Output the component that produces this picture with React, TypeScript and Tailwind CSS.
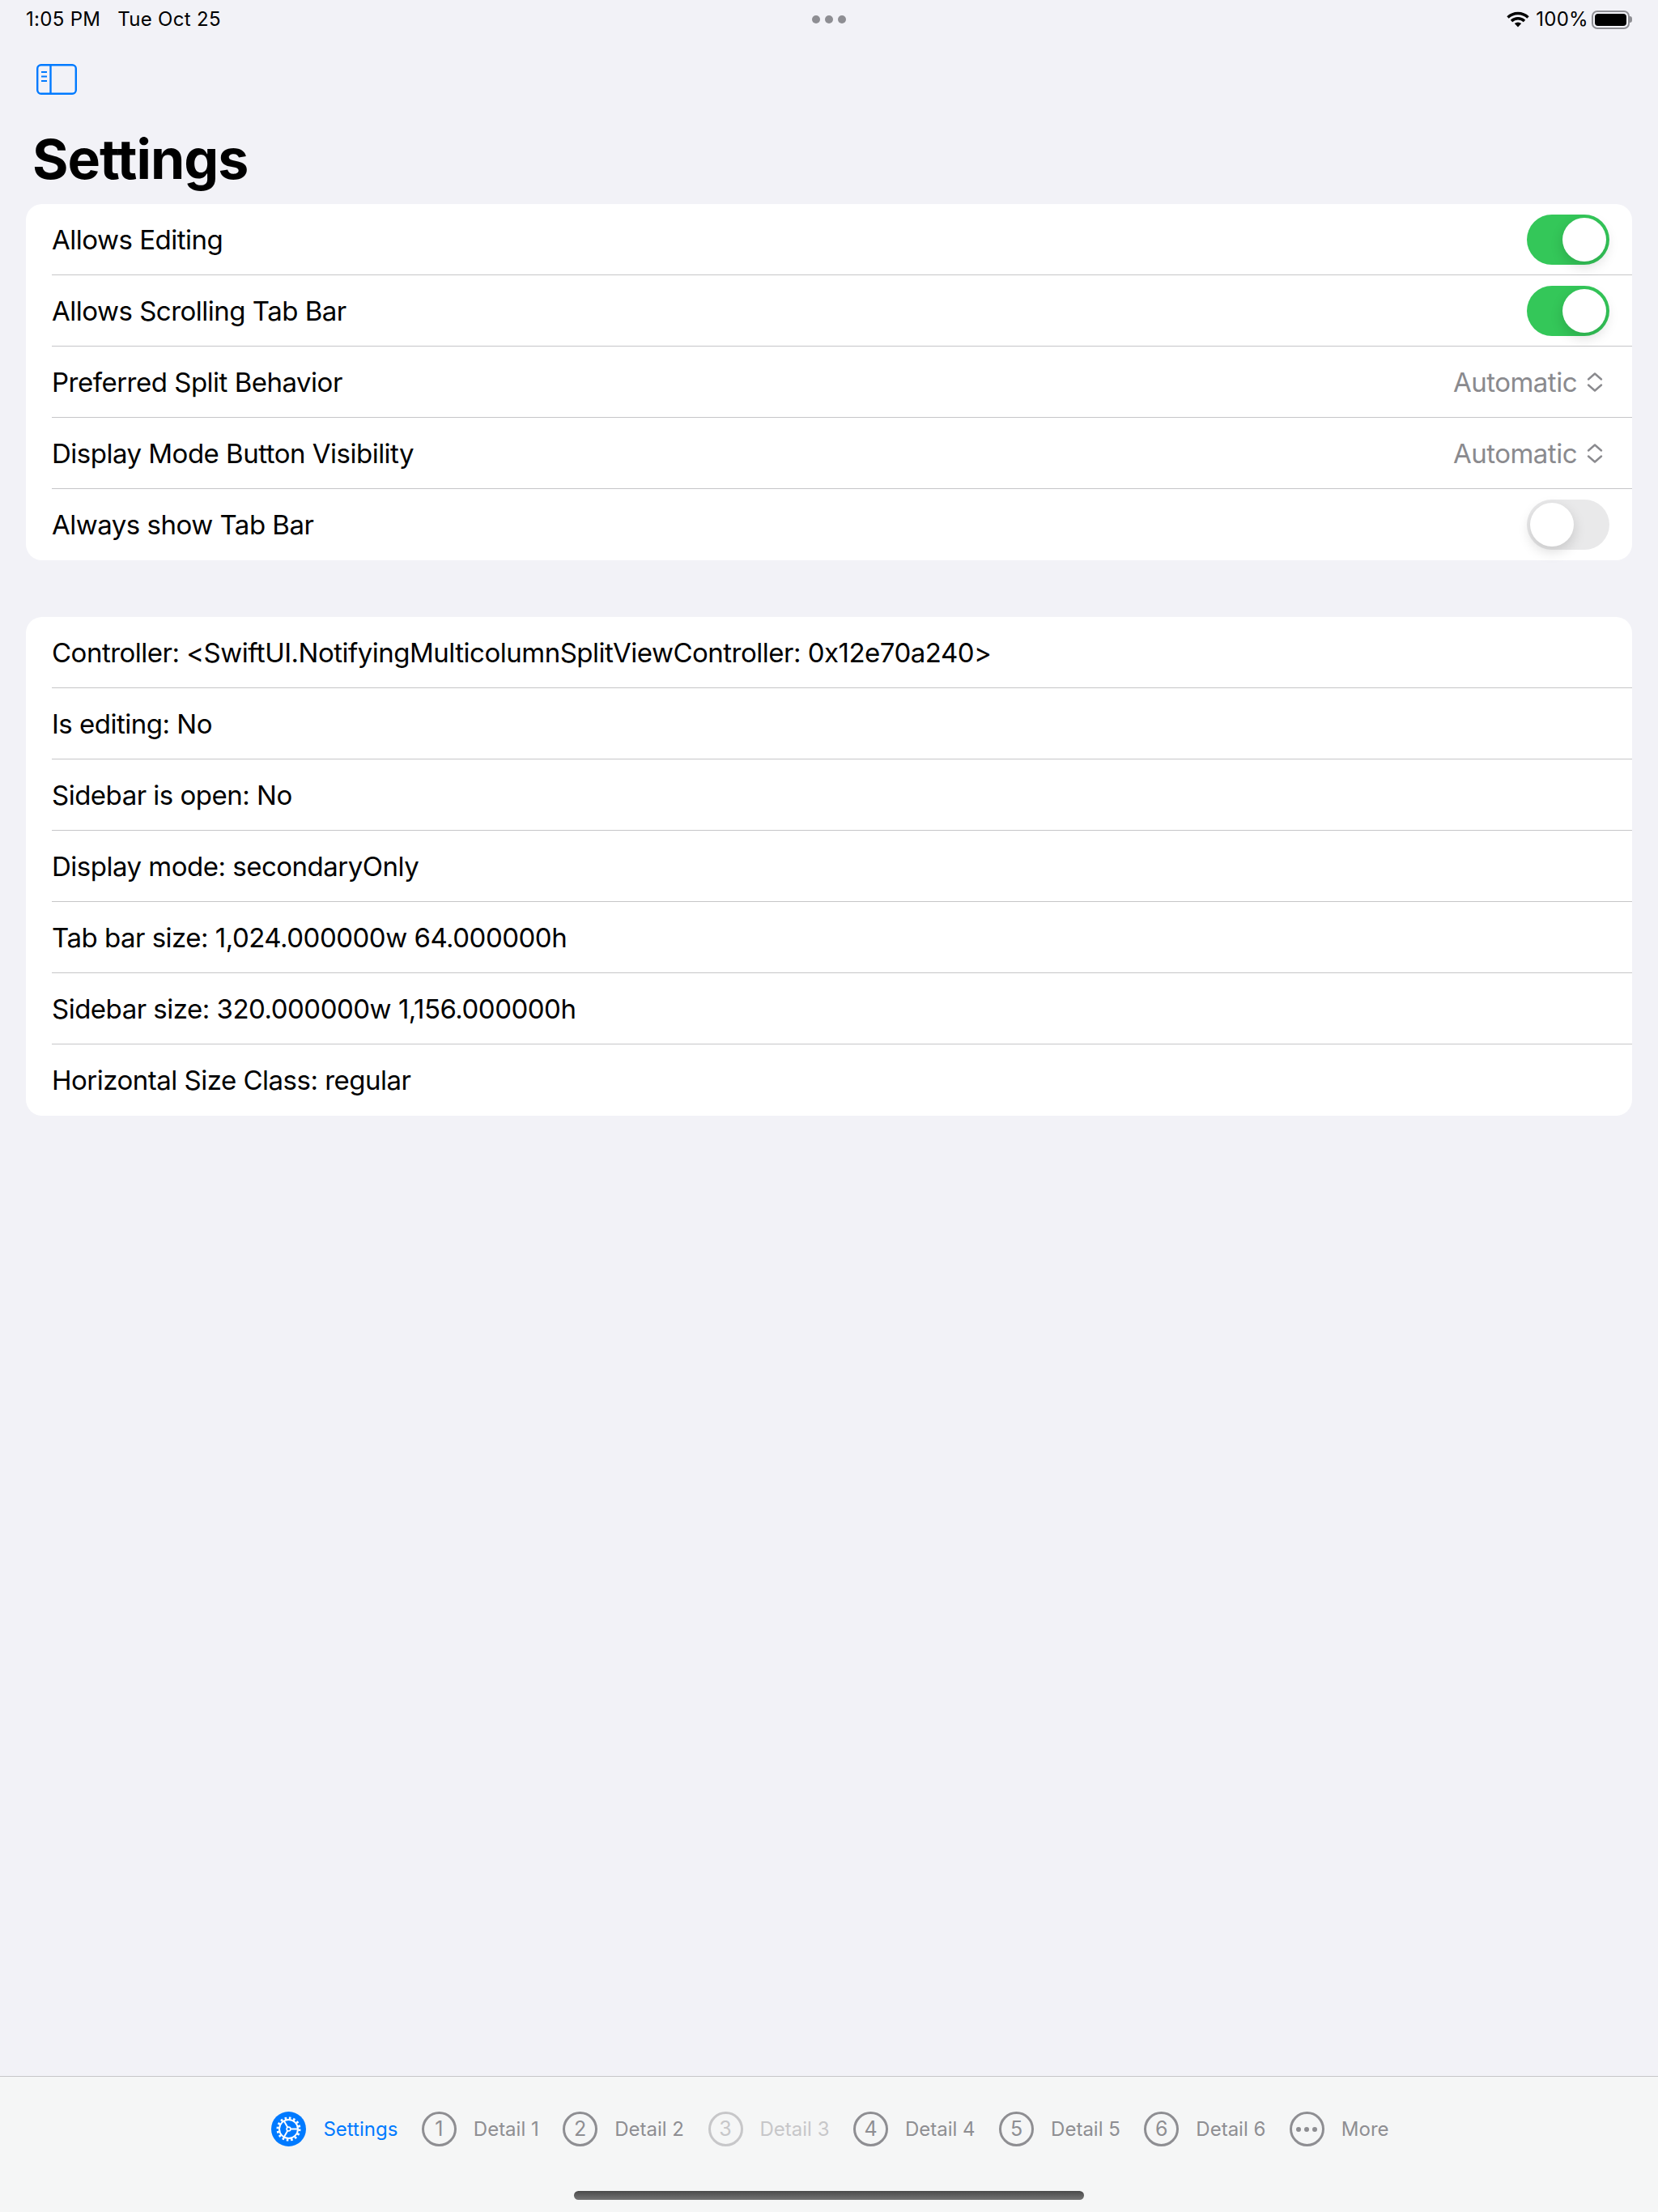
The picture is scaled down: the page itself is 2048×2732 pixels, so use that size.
import React from "react";

const Toggle = ({ on }: { on: boolean }) => (
  <div className={on ? "flex h-[62px] w-[102px] items-center justify-end rounded-full bg-[#34c759] px-[4px]" : "flex h-[62px] w-[102px] items-center justify-start rounded-full bg-[#e9e9ea] px-[4px]"}>
    <div className="h-[54px] w-[54px] rounded-full bg-white shadow-[0_6px_16px_rgba(0,0,0,0.15)]" />
  </div>
);

const Picker = () => (
  <div className="flex items-center gap-[12px] pr-[8px] text-[#8a8a8e]">
    <span className="pt-[2px]">Automatic</span>
    <svg width="20" height="26" viewBox="0 0 20 26" fill="none" stroke="#8a8a8e" strokeWidth="2.4" strokeLinecap="round" strokeLinejoin="round">
      <path d="M2 9.5 10 2.5l8 7" />
      <path d="M2 16.5l8 7 8-7" />
    </svg>
  </div>
);

const Row = ({ label, last, children }: { label: string; last?: boolean; children?: React.ReactNode }) => (
  <div className={last ? "ml-[32px] flex h-[88px] items-center justify-between pr-[28px]" : "ml-[32px] flex h-[88px] items-center justify-between border-b border-[#c6c6c8] pr-[28px]"}>
    <span className="pt-[2px]">{label}</span>
    {children}
  </div>
);

const GearIcon = () => (
  <svg width="43" height="43" viewBox="0 0 43 43" className="shrink-0">
    <circle cx="21.5" cy="21.5" r="21.5" fill="#007aff" />
    <circle cx="21.5" cy="21.5" r="13.5" fill="none" stroke="#fff" strokeWidth="3" strokeDasharray="2.6 2.7" />
    <circle cx="21.5" cy="21.5" r="11.5" fill="none" stroke="#fff" strokeWidth="2" />
    <circle cx="21.5" cy="21.5" r="2.4" fill="none" stroke="#fff" strokeWidth="1.6" />
    <path d="M24 21.5h9M20.2 19.3l-4.4-7.8M20.2 23.7l-4.4 7.8" stroke="#fff" strokeWidth="2" />
  </svg>
);

const Tab = ({ n, label, dim }: { n: string; label: string; dim?: boolean }) => (
  <div className={dim ? "flex items-center gap-[21px] text-[#c7c7c9]" : "flex items-center gap-[21px] text-[#8e8e92]"}>
    <div className="flex h-[43px] w-[43px] shrink-0 items-center justify-center rounded-full border-[3px] border-current text-[25px]">{n}</div>
    <span>{label}</span>
  </div>
);

export default function App() {
  return (
    <div className="flex h-[2732px] w-[2048px] flex-col overflow-hidden bg-[#f2f2f7] font-['Inter',sans-serif] text-black">
      {/* Status bar */}
      <div className="grid h-[48px] grid-cols-3 items-center px-[32px] text-[24px] leading-none tracking-[0.3px]">
        <div className="flex gap-[21px]">
          <span>1:05 PM</span>
          <span>Tue Oct 25</span>
        </div>
        <div className="flex justify-center gap-[6px]">
          <div className="h-[10px] w-[10px] rounded-full bg-[#8e8e93]" />
          <div className="h-[10px] w-[10px] rounded-full bg-[#8e8e93]" />
          <div className="h-[10px] w-[10px] rounded-full bg-[#8e8e93]" />
        </div>
        <div className="flex items-center justify-end gap-[4px]">
          <svg width="28" height="20" viewBox="0 0 28 20" fill="none" stroke="#000" strokeWidth="3.4" className="mr-[4px]">
            <path d="M1.5 7.5a18 18 0 0 1 25 0" />
            <path d="M6 12a11.5 11.5 0 0 1 16 0" />
            <path d="M14 19.5l-4.2-4.4a6 6 0 0 1 8.4 0z" fill="#000" stroke="none" />
          </svg>
          <span>100%</span>
          <div className="flex items-center">
            <div className="h-[23px] w-[47px] rounded-[7px] border-2 border-[#8e8e93] p-[2px]">
              <div className="h-full w-full rounded-[4px] bg-black" />
            </div>
            <div className="h-[8px] w-[3px] rounded-r-full bg-[#8e8e93]" />
          </div>
        </div>
      </div>

      {/* Nav bar */}
      <div className="px-[45px] pt-[31px]">
        <svg width="50" height="38" viewBox="0 0 50 38" fill="none" stroke="#007aff" strokeWidth="2.4" className="block">
          <rect x="1.2" y="1.2" width="47.6" height="35.6" rx="4.5" />
          <path d="M17.5 1v36" />
          <path d="M6 10h7M6 15.5h7M6 21h7" strokeWidth="2" />
        </svg>
      </div>
      <h1 className="mt-[38px] px-[40px] text-[68px] leading-[82px] font-bold tracking-[-1px]">Settings</h1>

      {/* Settings */}
      <div className="flex-1 px-[32px] pt-[15px] text-[33px] tracking-[-0.5px]">
        <div className="rounded-[20px] bg-white">
          <Row label="Allows Editing"><Toggle on /></Row>
          <Row label="Allows Scrolling Tab Bar"><Toggle on /></Row>
          <Row label="Preferred Split Behavior"><Picker /></Row>
          <Row label="Display Mode Button Visibility"><Picker /></Row>
          <Row label="Always show Tab Bar" last><Toggle on={false} /></Row>
        </div>
        <div className="mt-[70px] rounded-[20px] bg-white">
          <Row label="Controller: <SwiftUI.NotifyingMulticolumnSplitViewController: 0x12e70a240>" />
          <Row label="Is editing: No" />
          <Row label="Sidebar is open: No" />
          <Row label="Display mode: secondaryOnly" />
          <Row label="Tab bar size: 1,024.000000w 64.000000h" />
          <Row label="Sidebar size: 320.000000w 1,156.000000h" />
          <Row label="Horizontal Size Class: regular" last />
        </div>
      </div>

      {/* Tab bar */}
      <div className="flex h-[168px] flex-col items-center border-t border-[#c6c6c8] bg-[#f5f6f6]">
        <div className="mt-[43px] ml-[3px] flex items-center justify-center gap-[29.5px] text-[24px] leading-none whitespace-nowrap">
          <div className="flex items-center gap-[21px] text-[#007aff]">
            <GearIcon />
            <span>Settings</span>
          </div>
          <Tab n="1" label="Detail 1" />
          <Tab n="2" label="Detail 2" />
          <Tab n="3" label="Detail 3" dim />
          <Tab n="4" label="Detail 4" />
          <Tab n="5" label="Detail 5" />
          <Tab n="6" label="Detail 6" />
          <div className="flex items-center gap-[21px] text-[#8e8e92]">
            <div className="flex h-[43px] w-[43px] shrink-0 items-center justify-center gap-[4px] rounded-full border-[3px] border-current">
              <div className="h-[6px] w-[6px] rounded-full bg-current" />
              <div className="h-[6px] w-[6px] rounded-full bg-current" />
              <div className="h-[6px] w-[6px] rounded-full bg-current" />
            </div>
            <span>More</span>
          </div>
        </div>
        <div className="mt-[55px] h-[11px] w-[630px] rounded-full bg-gradient-to-b from-[#4a4a4a] to-[#757575]" />
      </div>
    </div>
  );
}
